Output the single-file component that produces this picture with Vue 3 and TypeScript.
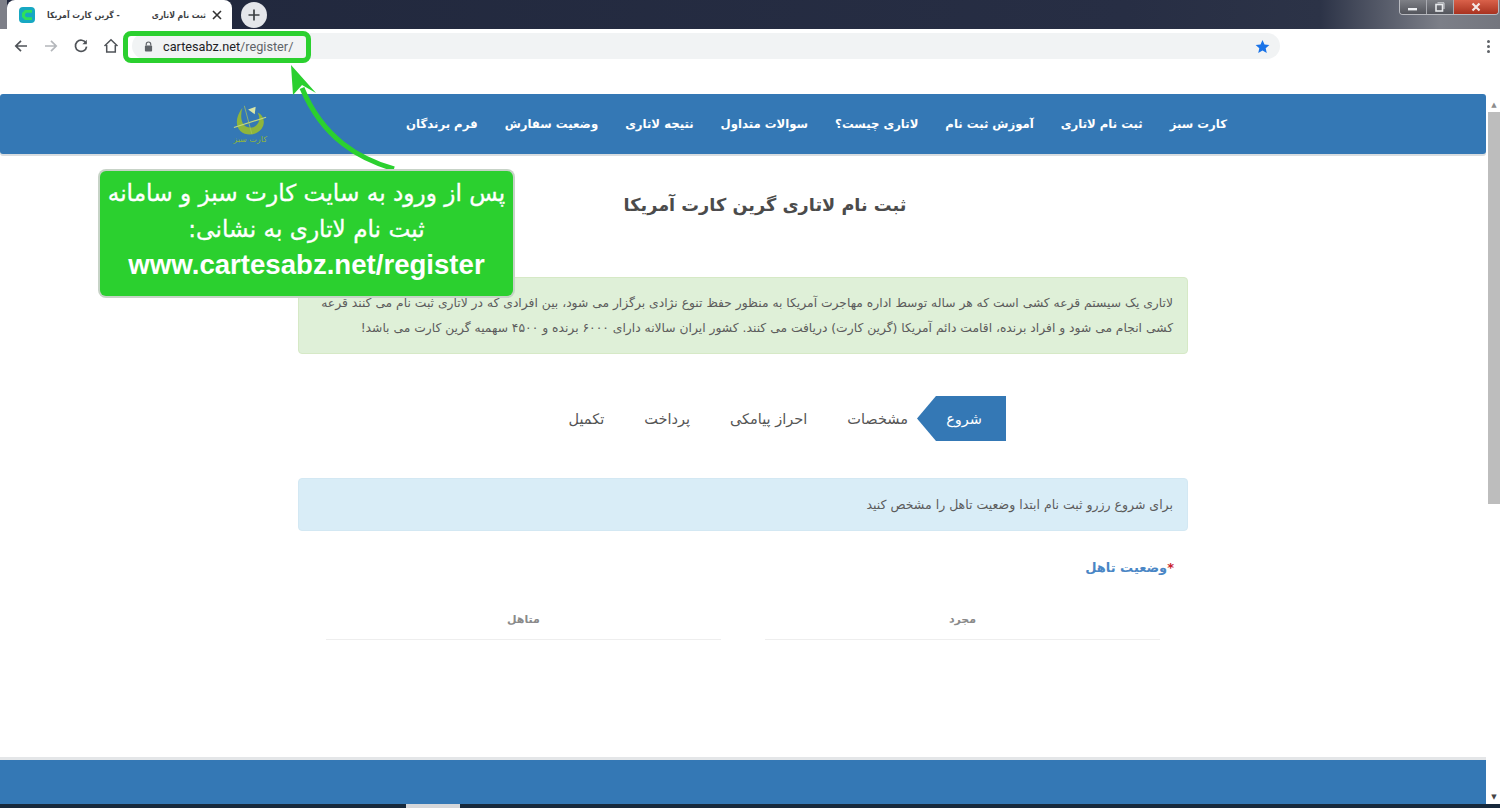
<script setup lang="ts">
interface NavItem {
	label: string;
}

const navItems: NavItem[] = [
	{ label: "کارت سبز" },
	{ label: "ثبت نام لاتاری" },
	{ label: "آموزش ثبت نام" },
	{ label: "لاتاری چیست؟" },
	{ label: "سوالات متداول" },
	{ label: "نتیجه لاتاری" },
	{ label: "وضعیت سفارش" },
	{ label: "فرم برندگان" },
];

const steps = ["مشخصات", "احراز پیامکی", "پرداخت", "تکمیل"];
const options = ["مجرد", "متاهل"];
</script>

<template>
	<div class="browser">
		<div class="tabstrip">
			<div class="tab">
				<svg class="favicon" viewBox="0 0 16 16">
					<rect width="16" height="16" rx="4" fill="#17a8c2" />
					<path d="M13 3H6L3 6V10L6 13H13V10.2H7.5L6 9V7L7.5 5.8H13Z" fill="#2fe05a" />
				</svg>
				<span class="tab-title tab-title-end">- گرین کارت آمریکا</span>
				<span class="tab-title">ثبت نام لاتاری</span>
				<svg class="tab-close" viewBox="0 0 10 10">
					<path d="M1 1L9 9M9 1L1 9" stroke="#333" stroke-width="1.6" />
				</svg>
			</div>
			<div class="new-tab">
				<svg viewBox="0 0 12 12" width="12" height="12">
					<path d="M6 0.5V11.5M0.5 6H11.5" stroke="#3c4043" stroke-width="1.7" />
				</svg>
			</div>
			<div class="window-controls">
				<span class="win-btn">
					<svg viewBox="0 0 12 8" width="12" height="8"><rect x="1" y="5" width="9" height="2.4" fill="#eef0f3" /></svg>
				</span>
				<span class="win-btn win-restore">
					<svg viewBox="0 0 10 10" width="10" height="10">
						<path d="M2.5 0.8H9V7" fill="none" stroke="#d5d8dc" />
						<rect x="1" y="2.5" width="6.5" height="6.5" fill="none" stroke="#e8eaed" stroke-width="1.6" />
					</svg>
				</span>
				<span class="win-btn win-close">
					<svg viewBox="0 0 10 10" width="10" height="10">
						<path d="M1.5 1.5L8.5 8.5M8.5 1.5L1.5 8.5" stroke="#f4e8e5" stroke-width="2.2" />
					</svg>
				</span>
			</div>
		</div>

		<div class="toolbar">
			<svg class="tool" viewBox="0 0 16 16">
				<path d="M14 8H3M8 2.8L2.8 8L8 13.2" fill="none" stroke="#4f5358" stroke-width="1.7" />
			</svg>
			<svg class="tool" viewBox="0 0 16 16">
				<path d="M2 8H13M8 2.8L13.2 8L8 13.2" fill="none" stroke="#b4b7bb" stroke-width="1.7" />
			</svg>
			<svg class="tool" viewBox="0 0 16 16">
				<path d="M13 5.2A5.6 5.6 0 1 0 13.6 8.6" fill="none" stroke="#4f5358" stroke-width="1.7" />
				<path d="M13.8 1.8V6.2H9.4Z" fill="#4f5358" />
			</svg>
			<svg class="tool" viewBox="0 0 16 16">
				<path d="M1.5 8L8 1.8L14.5 8M3.7 7V14H12.3V7" fill="none" stroke="#4f5358" stroke-width="1.5" />
			</svg>
			<div class="omnibox">
				<svg class="lock" viewBox="0 0 10 12" width="9" height="11">
					<path d="M2.5 5V3.5A2.5 2.5 0 0 1 7.5 3.5V5" fill="none" stroke="#5f6368" stroke-width="1.3" />
					<rect x="1" y="5" width="8" height="6.5" rx="1" fill="#5f6368" />
				</svg>
				<span class="url">cartesabz.net<span class="url-path">/register/</span></span>
				<svg class="star" viewBox="0 0 24 24" width="15" height="15">
					<path d="M12 1.5L15.2 8.6L23 9.4L17.1 14.6L18.8 22.3L12 18.3L5.2 22.3L6.9 14.6L1 9.4L8.8 8.6Z" fill="#1a73e8" />
				</svg>
			</div>
			<div class="kebab"><i></i><i></i><i></i></div>
		</div>

		<div class="viewport">
			<main class="page">
				<nav class="navbar">
					<a v-for="item in navItems" :key="item.label" class="nav-link">{{ item.label }}</a>
					<div class="logo">
						<svg viewBox="0 0 40 36" width="38" height="34">
							<path d="M12 5C5 14 4 24 10 30C17 36 30 34 34 24C36 18 33 12 28 10C33 19 27 27 19 26C11 25 9 15 12 5Z" fill="#8fb53c" />
							<path d="M18 7L26 4L25 12L21 9Z" fill="#d9e6a6" />
							<path d="M3 26L37 15" stroke="#c3d77f" stroke-width="1.2" />
							<path d="M14 3L22 33" stroke="#a8c25a" stroke-width="0.8" />
						</svg>
						<span class="logo-text">کارت سبز</span>
					</div>
				</nav>

				<h1 class="page-title">ثبت نام لاتاری گرین کارت آمریکا</h1>

				<section class="content">
					<p class="alert alert-green">
						لاتاری یک سیستم قرعه کشی است که هر ساله توسط اداره مهاجرت آمریکا به منظور حفظ تنوع نژادی برگزار می شود، بین افرادی که در لاتاری ثبت نام می کنند قرعه کشی انجام می شود و افراد برنده، اقامت دائم آمریکا (گرین کارت) دریافت می کنند. کشور ایران سالانه دارای ۶۰۰۰ برنده و ۴۵۰۰ سهمیه گرین کارت می باشد!
					</p>

					<div class="steps">
						<span class="step-active">شروع</span>
						<span v-for="step in steps" :key="step" class="step">{{ step }}</span>
					</div>

					<p class="alert alert-blue">برای شروع رزرو ثبت نام ابتدا وضعیت تاهل را مشخص کنید</p>

					<h2 class="field-label"><span class="required">*</span>وضعیت تاهل</h2>
					<div class="options">
						<div v-for="option in options" :key="option" class="option">{{ option }}</div>
					</div>
				</section>

				<footer class="footer"></footer>
			</main>
			<div class="scrollbar">
				<span class="scroll-arrow">▲</span>
				<span class="scroll-thumb"></span>
				<span class="scroll-arrow scroll-arrow-down">▼</span>
			</div>
		</div>

		<div class="taskbar"><span class="task-item"></span></div>

		<!-- annotation drawn over the screenshot -->
		<div class="url-highlight"></div>
		<svg class="arrow" viewBox="0 0 130 110" width="130" height="110">
			<path d="M109 105C75 95 38 75 17 24" fill="none" stroke="#2bd02f" stroke-width="5" />
			<path d="M6 1L31 29L17 21L8 31Z" fill="#2bd02f" />
		</svg>
		<div class="callout">
			<div class="callout-fa">پس از ورود به سایت کارت سبز و سامانه</div>
			<div class="callout-fa">ثبت نام لاتاری به نشانی:</div>
			<div class="callout-url">www.cartesabz.net/register</div>
		</div>
	</div>
</template>

<style scoped>
.browser {
	position: relative;
	display: flex;
	flex-direction: column;
	width: 1500px;
	height: 808px;
	overflow: hidden;
	background: #fff;
	font-family: "DejaVu Sans", "Noto Sans", sans-serif;
}

.tabstrip {
	display: flex;
	align-items: center;
	flex: none;
	height: 29px;
	padding-left: 7px;
	background: linear-gradient(90deg, #7d7f88 0, #7d7f88 7px, #20273c 7px, #272e44 75%, #2c3347 88%, #7c7f88 96%, #74767e 100%);
}

.tab {
	display: flex;
	align-items: center;
	align-self: stretch;
	width: 225px;
	padding: 0 10px 0 12px;
	box-sizing: border-box;
	background: #fff;
	border-radius: 8px 8px 0 0;
}

.favicon {
	flex: none;
	width: 16px;
	height: 16px;
}

.tab-title {
	margin-left: 6px;
	font-family: "DejaVu Sans Condensed", "DejaVu Sans", sans-serif;
	font-size: 8.6px;
	font-weight: 700;
	white-space: nowrap;
	color: #3c4043;
}

.tab-title-end {
	direction: rtl;
	flex: 1;
	margin-left: 12px;
	text-align: left;
}

.tab-close {
	flex: none;
	width: 10px;
	height: 10px;
	margin-left: 6px;
}

.new-tab {
	display: flex;
	align-items: center;
	justify-content: center;
	width: 26px;
	height: 26px;
	margin-left: 9px;
	border-radius: 50%;
	background: #e4e6ea;
}

.window-controls {
	display: flex;
	align-self: flex-start;
	height: 14px;
	margin-left: auto;
	margin-right: 1px;
	border: 1px solid #b8bac0;
	border-top: none;
	border-radius: 0 0 4px 4px;
	overflow: hidden;
}

.win-btn {
	display: flex;
	align-items: center;
	justify-content: center;
	width: 26px;
	border-right: 1px solid #a9abb1;
	background: linear-gradient(#7e8086, #53555c);
}

.win-close {
	width: 44px;
	border-right: none;
	background: linear-gradient(#d9614a, #a8321f);
}

.toolbar {
	display: flex;
	align-items: center;
	flex: none;
	height: 34px;
	padding: 0 13px;
	gap: 14px;
	background: #fff;
}

.tool {
	flex: none;
	width: 16px;
	height: 16px;
}

.omnibox {
	display: flex;
	align-items: center;
	flex: none;
	width: 1148px;
	height: 26px;
	margin-left: -1px;
	padding: 0 10px 0 12px;
	box-sizing: border-box;
	border-radius: 13px;
	background: #f1f3f4;
}

.url {
	margin-left: 10px;
	font-family: "Roboto", sans-serif;
	font-size: 12.7px;
	color: #202124;
}

.url-path {
	color: #5f6368;
}

.star {
	margin-left: auto;
}

.kebab {
	display: flex;
	flex-direction: column;
	gap: 2px;
	margin-left: auto;
	margin-right: -3px;
}

.kebab i {
	display: block;
	width: 3px;
	height: 3px;
	border-radius: 50%;
	background: #5f6368;
}

.viewport {
	display: flex;
	flex: 1;
	min-height: 0;
}

.page {
	display: flex;
	flex-direction: column;
	flex: 1;
	min-width: 0;
	padding-top: 31px;
}

.navbar {
	display: flex;
	align-items: center;
	direction: rtl;
	flex: none;
	height: 60px;
	padding-right: 259px;
	gap: 27px;
	box-sizing: border-box;
	background: #3478b5;
	border-radius: 3px;
	box-shadow: 0 2px 0 #d9dde0;
}

.nav-link {
	font-size: 11.7px;
	font-weight: 700;
	white-space: nowrap;
	color: #fff;
}

.logo {
	display: flex;
	flex-direction: column;
	align-items: center;
	width: 50px;
	margin-right: 104px;
	color: #8fb53c;
}

.logo-text {
	margin-top: -3px;
	font-size: 8px;
	line-height: 11px;
	white-space: nowrap;
}

.page-title {
	flex: none;
	margin: 37px 0 0;
	padding-left: 44px;
	font-size: 17.7px;
	font-weight: 700;
	line-height: 28px;
	color: #4b4b4b;
	text-align: center;
	direction: rtl;
}

.content {
	flex: none;
	width: 890px;
	margin: 0 auto;
	padding-top: 58px;
	direction: rtl;
}

.alert {
	margin: 0;
	padding: 0 14px;
	border-radius: 4px;
	font-size: 12.5px;
	color: #5c5c5c;
}

.alert-green {
	display: flex;
	align-items: center;
	height: 77px;
	padding-left: 6px;
	box-sizing: border-box;
	font-size: 12.3px;
	line-height: 25px;
	background: #dff0d8;
	border: 1px solid #d6e9c6;
}

.alert-blue {
	display: flex;
	align-items: center;
	height: 53px;
	background: #d9edf7;
	border: 1px solid #d3e8f3;
	box-sizing: border-box;
}

.steps {
	display: flex;
	align-items: center;
	gap: 40px;
	height: 45px;
	margin: 42px 0 37px;
	padding-right: 182px;
	font-size: 14.5px;
	color: #555;
}

.step-active {
	display: flex;
	align-items: center;
	box-sizing: border-box;
	width: 89px;
	height: 45px;
	margin-left: -31px;
	padding-right: 24px;
	color: #fff;
	background: #3478b5;
	clip-path: polygon(100% 0, 100% 100%, 19px 100%, 0 50%, 19px 0);
}

.step {
	white-space: nowrap;
}

.field-label {
	margin: 27px 14px 0 0;
	font-size: 13px;
	font-weight: 700;
	line-height: 20px;
	color: #4a86c5;
}

.required {
	color: #c9202c;
}

.options {
	display: grid;
	grid-template-columns: 1fr 1fr;
	gap: 44px;
	margin: 33px 28px 0 28px;
}

.option {
	height: 29px;
	padding-top: 2px;
	box-sizing: border-box;
	border-bottom: 1px solid #eee;
	font-size: 11px;
	font-weight: 700;
	color: #8a8a8a;
	text-align: center;
}

.footer {
	flex: 1;
	margin-top: 120px;
	background: #3478b5;
	box-shadow: 0 -3px 0 #e4e6e8;
}

.scrollbar {
	display: flex;
	flex-direction: column;
	flex: none;
	width: 14px;
}

.scroll-arrow {
	flex: none;
	height: 14px;
	margin-top: 35px;
	padding-left: 2px;
	font-size: 7px;
	line-height: 14px;
	color: #8d8d8d;
	text-align: center;
}

.scroll-arrow-down {
	margin-top: auto;
	color: #444;
}

.scroll-thumb {
	flex: none;
	height: 392px;
	margin-left: 2px;
	background: #bdbdbd;
}

.taskbar {
	display: flex;
	flex: none;
	height: 4px;
	background: #17293c;
}

.task-item {
	width: 54px;
	margin-left: 406px;
	background: #d5d7da;
}

.url-highlight {
	position: absolute;
	left: 123px;
	top: 31px;
	width: 188px;
	height: 32px;
	box-sizing: border-box;
	border: 5px solid #2bd02f;
	border-radius: 8px;
}

.arrow {
	position: absolute;
	left: 285px;
	top: 64px;
}

.callout {
	position: absolute;
	left: 100px;
	top: 171px;
	width: 413px;
	height: 125px;
	padding-top: 4px;
	box-sizing: border-box;
	border-radius: 6px;
	background: #2bd02f;
	box-shadow: 0 0 0 2px #c7d3c7;
	color: #fff;
	text-align: center;
}

.callout-fa {
	direction: rtl;
	font-size: 23.2px;
	line-height: 36px;
	white-space: nowrap;
	-webkit-text-stroke: 0.3px #fff;
}

.callout-url {
	font-family: "Liberation Sans", sans-serif;
	font-size: 27.6px;
	font-weight: 700;
	line-height: 36px;
}
</style>

<style>
html,
body {
	margin: 0;
	overflow: hidden;
}
</style>
